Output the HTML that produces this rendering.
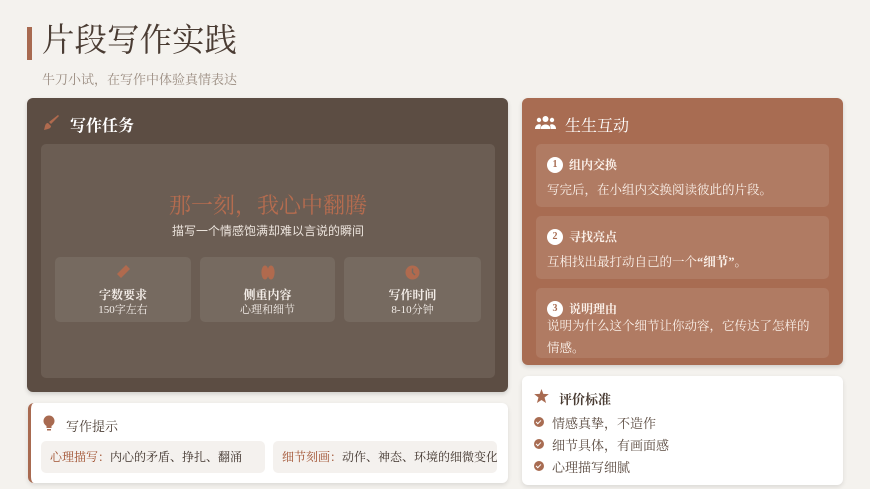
<!DOCTYPE html>
<html><head><meta charset="utf-8"><style>
*{margin:0;padding:0;box-sizing:border-box}
body{width:870px;height:489px;background:#f4f2ee;font-family:"Liberation Serif","Noto Serif CJK SC",serif;position:relative;overflow:hidden;color:#4a3c33}
.abs{position:absolute}
.sans{font-family:"Liberation Sans","Noto Sans CJK SC",sans-serif}
.box3{position:absolute;top:257px;height:65px;background:#766a60;border-radius:5px;text-align:center;color:#f3ede8}
.box3 .t{position:absolute;top:29px;left:0;right:0;font-size:12px;font-weight:bold}
.box3 .s{position:absolute;top:44px;left:0;right:0;font-size:11px}
.ri{position:absolute;left:536px;width:293px;background:rgba(255,255,255,0.1);border-radius:5px;color:#fbf1ea}
.num{position:absolute;left:11px;top:13px;width:16px;height:16px;border-radius:50%;background:#fff;color:#a86c52;font-size:10px;font-weight:bold;text-align:center;line-height:16px}
.ri .h{position:absolute;left:33px;top:12px;font-size:12px;font-weight:bold}
.ri .p{position:absolute;left:11px;top:36px;font-size:12.5px;line-height:20px;width:275px}
.chk{position:absolute;left:534px;width:10px;height:10px;border-radius:50%;background:#a86c52}
.chk::after{content:"";position:absolute;left:3px;top:2px;width:2px;height:4px;border:solid #fff;border-width:0 1.3px 1.3px 0;transform:rotate(45deg)}
.ev{position:absolute;left:552px;font-size:13px;color:#5a4a40}
</style></head><body>
<div class="abs" style="left:27px;top:27px;width:5px;height:33px;background:#a86a50"></div>
<div class="abs" style="left:42px;top:21px;font-size:32.5px;color:#4a3c33;line-height:40px">片段写作实践</div>
<div class="abs" style="left:42px;top:69px;font-size:13px;color:#9a8c80">牛刀小试，在写作中体验真情表达</div>

<div class="abs" style="left:27px;top:98px;width:481px;height:294px;background:#5c4d43;border-radius:6px;box-shadow:0 2px 4px rgba(0,0,0,.15)"></div>
<svg class="abs" style="left:43px;top:114px" width="17" height="17" viewBox="0 0 17 17"><path d="M15 1 L16 2 L8 10 L6 8 Z" fill="#b06a4e"/><path d="M5 9 C2 9 2 13 1 16 C4 15 8 15 8 12 Z" fill="#b06a4e"/></svg>
<div class="abs" style="left:70px;top:113px;font-size:16px;font-weight:bold;color:#fff">写作任务</div>
<div class="abs" style="left:41px;top:144px;width:454px;height:234px;background:#6b5d53;border-radius:5px"></div>
<div class="abs" style="left:41px;width:454px;top:189px;text-align:center;font-size:22px;color:#b56c4f">那一刻，我心中翻腾</div>
<div class="abs sans" style="left:41px;width:454px;top:222px;text-align:center;font-size:12px;color:#ece4dd">描写一个情感饱满却难以言说的瞬间</div>

<div class="box3" style="left:55px;width:136px"><svg class="abs" style="left:61px;top:7px" width="15" height="15" viewBox="0 0 15 15"><path d="M1 10 L10 1 L14 5 L5 14 Z" fill="#b06a4e"/></svg><div class="t">字数要求</div><div class="s">150字左右</div></div>
<div class="box3" style="left:200px;width:135px"><svg class="abs" style="left:61px;top:8px" width="14" height="15" viewBox="0 0 14 15"><ellipse cx="4" cy="7.5" rx="3.6" ry="7" fill="#b06a4e"/><ellipse cx="10" cy="7.5" rx="3.6" ry="7" fill="#b06a4e"/></svg><div class="t">侧重内容</div><div class="s">心理和细节</div></div>
<div class="box3" style="left:344px;width:137px"><svg class="abs" style="left:61px;top:8px" width="15" height="15" viewBox="0 0 15 15"><circle cx="7.5" cy="7.5" r="7" fill="#b06a4e"/><path d="M7.5 3.5 V7.5 L10 10" stroke="#766a60" stroke-width="1.5" fill="none"/></svg><div class="t">写作时间</div><div class="s">8-10分钟</div></div>

<div class="abs" style="left:28px;top:403px;width:480px;height:80px;background:#fff;border-radius:6px;border-left:3px solid #a86a50;box-shadow:0 2px 5px rgba(0,0,0,.1)"></div>
<svg class="abs" style="left:43px;top:415px" width="12" height="16" viewBox="0 0 12 16"><circle cx="6" cy="6" r="5.5" fill="#a86a50"/><rect x="3.5" y="11" width="5" height="2" fill="#a86a50"/><rect x="4" y="14" width="4" height="1.5" fill="#a86a50"/></svg>
<div class="abs" style="left:66px;top:416px;font-size:13px;color:#4a3c33">写作提示</div>
<div class="abs" style="left:41px;top:441px;width:224px;height:32px;background:#f4f1ee;border-radius:5px;font-size:12px;line-height:32px;padding-left:9px;color:#3e322b;white-space:nowrap"><span style="color:#a0502f">心理描写：</span>内心的矛盾、挣扎、翻涌</div>
<div class="abs" style="left:273px;top:441px;width:224px;height:32px;background:#f4f1ee;border-radius:5px;font-size:12px;line-height:32px;padding-left:9px;color:#3e322b;white-space:nowrap;overflow:hidden"><span style="color:#a0502f">细节刻画：</span>动作、神态、环境的细微变化</div>

<div class="abs" style="left:522px;top:98px;width:321px;height:267px;background:#a86c52;border-radius:6px;box-shadow:0 2px 4px rgba(0,0,0,.15)"></div>
<svg class="abs" style="left:535px;top:115px" width="21" height="15" viewBox="0 0 21 15"><circle cx="10.5" cy="4" r="3" fill="#fff"/><circle cx="4" cy="5" r="2.2" fill="#fff"/><circle cx="17" cy="5" r="2.2" fill="#fff"/><path d="M5.5 14 C5.5 8 15.5 8 15.5 14 Z" fill="#fff"/><path d="M0 14 C0 9 5 8.5 6 10 L5 14 Z" fill="#fff"/><path d="M21 14 C21 9 16 8.5 15 10 L16 14 Z" fill="#fff"/></svg>
<div class="abs" style="left:565px;top:113px;font-size:16px;color:#fff">生生互动</div>
<div class="ri" style="top:144px;height:63px"><div class="num">1</div><div class="h">组内交换</div><div class="p">写完后，在小组内交换阅读彼此的片段。</div></div>
<div class="ri" style="top:216px;height:63px"><div class="num">2</div><div class="h">寻找亮点</div><div class="p">互相找出最打动自己的一个<b>“细节”</b>。</div></div>
<div class="ri" style="top:288px;height:70px"><div class="num">3</div><div class="h">说明理由</div><div class="p" style="top:27px;width:268px;line-height:22px">说明为什么这个细节让你动容，它传达了怎样的情感。</div></div>

<div class="abs" style="left:522px;top:376px;width:321px;height:109px;background:#fff;border-radius:6px;box-shadow:0 2px 5px rgba(0,0,0,.1)"></div>
<svg class="abs" style="left:534px;top:389px" width="15" height="14" viewBox="0 0 24 23"><path d="M12 0 L15 8 L24 8.5 L17 14 L19.5 23 L12 18 L4.5 23 L7 14 L0 8.5 L9 8 Z" fill="#a86a50"/></svg>
<div class="abs" style="left:559px;top:389px;font-size:13px;font-weight:bold;color:#4a3c33">评价标准</div>
<div class="chk" style="top:417px"></div><div class="ev" style="top:413px">情感真挚，不造作</div>
<div class="chk" style="top:439px"></div><div class="ev" style="top:435px">细节具体，有画面感</div>
<div class="chk" style="top:461px"></div><div class="ev" style="top:457px">心理描写细腻</div>
</body></html>
